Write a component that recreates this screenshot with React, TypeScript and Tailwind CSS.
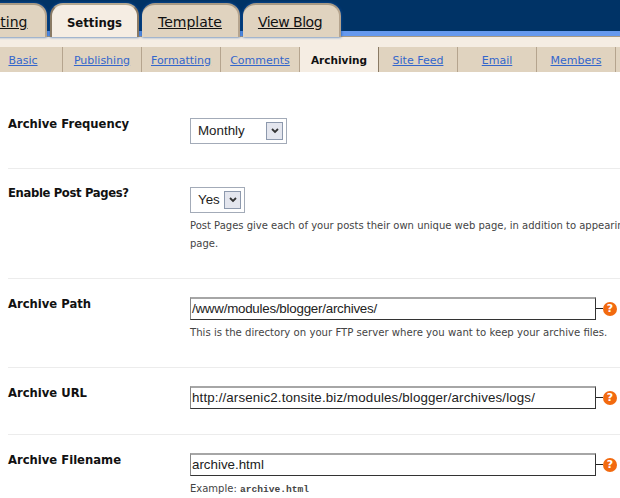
const mainTabs = [
  { label: 'Posting', width: 'w-[88px] -ml-[41px] pt-[3px]' },
  { label: 'Settings', width: 'w-[89px] pt-[5px]', active: true },
  { label: 'Template', width: 'w-[98px] pt-[3px]' },
  { label: 'View Blog', width: 'w-[98px] pt-[3px] pr-[2px] tracking-[-0.5px]' },
]

const subTabs = [
  { label: 'Basic', width: 'w-[79px] -ml-[16px]' },
  { label: 'Publishing', width: 'w-[79px]' },
  { label: 'Formatting', width: 'w-[79px]' },
  { label: 'Comments', width: 'w-[79px]' },
  { label: 'Archiving', width: 'w-[79px]', active: true },
  { label: 'Site Feed', width: 'w-[79px]' },
  { label: 'Email', width: 'w-[79px]' },
  { label: 'Members', width: 'w-[79px]' },
]

function HelpIcon() {
  return (
    <span className="flex items-center">
      <span className="h-px w-[7px] bg-[#222]" />
      <span className="flex h-[14px] w-[14px] items-center justify-center rounded-full bg-[#f26a0f] text-[11px] leading-none font-bold text-white">?</span>
    </span>
  )
}

function Select({ value, width }: { value: string; width: string }) {
  return (
    <div className={`flex h-[26px] items-center justify-between border border-[#a3abb8] bg-white pr-[3px] pl-[7px] ${width}`}>
      <span className="text-[13.33px] text-[#222] [font-family:'Liberation_Sans',sans-serif]">{value}</span>
      <span className="flex h-[18px] w-[17px] items-center justify-center border border-[#8d99ad] bg-[#e4e6ee]">
        <svg width="8" height="6" viewBox="0 0 8 6"><path d="M1 1l3 3 3-3" fill="none" stroke="#333" strokeWidth="1.8" /></svg>
      </span>
    </div>
  )
}

function TextBox({ value, spacing = '' }: { value: string; spacing?: string }) {
  return (
    <div className="flex items-center">
      <div className={`flex h-[23px] w-[406px] items-center border border-t-2 border-r-[#333] border-b-[#333] border-l-[#888] border-t-[#a6a6a6] bg-white pl-px text-[13.33px] text-[#222] [font-family:'Liberation_Sans',sans-serif] ${spacing}`}>{value}</div>
      <HelpIcon />
    </div>
  )
}

function Row({ label, height, children, last, labelClass = '' }: { label: string; height: string; children: React.ReactNode; last?: boolean; labelClass?: string }) {
  return (
    <div className={`ml-2 flex ${height} ${last ? '' : 'border-b border-[#ececec]'}`}>
      <div className={`w-[182px] shrink-0 text-[11.6px] leading-[15px] font-bold text-[#111] ${labelClass}`}>{label}</div>
      <div className="min-w-0 flex-1 whitespace-nowrap">{children}</div>
    </div>
  )
}

function Help({ children, size = 'text-[10.15px]' }: { children: React.ReactNode; size?: string }) {
  return <p className={`mt-[4px] leading-[18px] text-[#444] ${size}`}>{children}</p>
}

export default function App() {
  return (
    <div className="h-[498px] w-[620px] overflow-hidden bg-white [font-family:'DejaVu_Sans',sans-serif]">
      <div className="h-[31px] bg-[#003366]" />
      <div className="h-[6px] border-b border-[#a89a84] bg-[#6699ee]" />
      <nav className="-mt-[34px] flex h-[34px] items-end gap-[3px]">
        {mainTabs.map(tab => (
          <a
            key={tab.label}
            className={`flex h-[34px] shrink-0 items-center justify-center rounded-t-[13px] border-t-2 shadow-[0_0_3px_#0e50a8] ${tab.width} ${tab.active ? 'border-x-2 border-x-[#8a7a64] border-t-[#b5a890] bg-[#f5ede3] text-[11.7px] font-bold text-[#111]' : 'border-r-2 border-r-[#b5a48e] border-t-[#a89a84] bg-[#e0d3bf] text-[14px] text-[#111] underline'}`}
          >
            {tab.label}
          </a>
        ))}
      </nav>
      <div className="bg-[#f5ede3] pt-[10px]">
        <div className="flex h-[25px] whitespace-nowrap">
          {subTabs.map(tab => (
            <a
              key={tab.label}
              className={`flex shrink-0 items-center justify-center pt-[3px] ${tab.width} ${tab.active ? 'border-r border-[#8a7a64] bg-[#f5ede3] text-[10.5px] font-bold text-[#111]' : 'border-r border-[#b5a48e] bg-[#e0d3bf] text-[11px] text-[#3366cc] underline'}`}
            >
              {tab.label}
            </a>
          ))}
          <div className="flex-1 bg-[#e0d3bf]" />
        </div>
      </div>
      <div className="pt-[45px]">
        <Row label="Archive Frequency" height="h-[52px]">
          <div className="mt-px"><Select value="Monthly" width="w-[97px]" /></div>
        </Row>
        <Row label="Enable Post Pages?" height="h-[110px] pt-[17px]" labelClass="tracking-[-0.35px]">
          <div className="mt-px"><Select value="Yes" width="w-[55px]" /></div>
          <Help size="text-[10px]">Post Pages give each of your posts their own unique web page, in addition to appearing on your main<br />page.</Help>
        </Row>
        <Row label="Archive Path" height="h-[89px] pt-[18px]">
          <TextBox value="/www/modules/blogger/archives/" spacing="tracking-[-0.23px]" />
          <Help>This is the directory on your FTP server where you want to keep your archive files.</Help>
        </Row>
        <Row label="Archive URL" height="h-[67px] pt-[18px]">
          <TextBox value="http://arsenic2.tonsite.biz/modules/blogger/archives/logs/" spacing="tracking-[0.14px]" />
        </Row>
        <Row label="Archive Filename" height="h-[64px] pt-[18px]" last>
          <TextBox value="archive.html" />
          <Help size="text-[10px]">Example: <code className="text-[9.6px] font-bold [font-family:'Liberation_Mono',monospace]">archive.html</code></Help>
        </Row>
      </div>
    </div>
  )
}
